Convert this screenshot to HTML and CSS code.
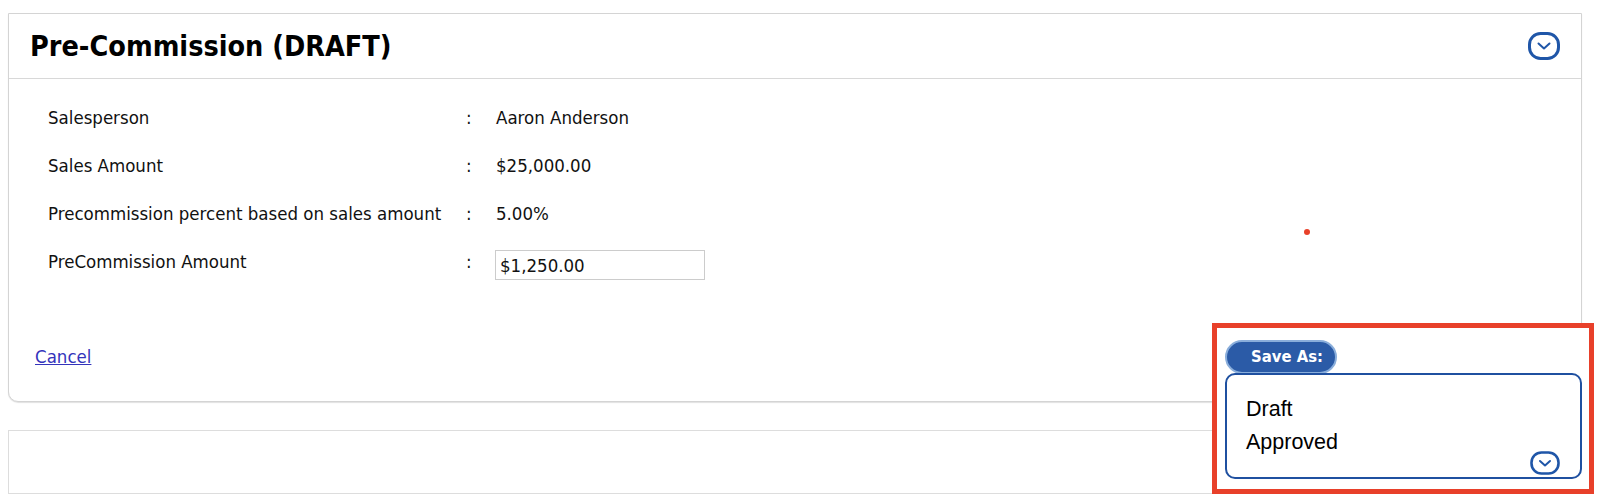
FILE: index.html
```html
<!DOCTYPE html>
<html lang="en">
<head>
<meta charset="utf-8">
<title>Pre-Commission (DRAFT)</title>
<link rel="stylesheet" href="styles.css">
</head>
<body>
<div class="page">
  <section class="card">
    <header class="card-head">
      <h1 class="title">Pre-Commission (DRAFT)</h1>
      <svg class="chev" width="32" height="28" viewBox="0 0 32 28" aria-hidden="true">
        <rect x="1.5" y="1.5" width="29" height="25" rx="11" ry="11" fill="none" stroke="#1f56a8" stroke-width="3"/>
        <path d="M10.5 11.5 L16 16.5 L21.5 11.5" fill="none" stroke="#1f56a8" stroke-width="2" stroke-linecap="round" stroke-linejoin="round"/>
      </svg>
    </header>
    <div class="card-body">
      <div class="rows">
        <div class="row"><span class="label">Salesperson</span><span class="colon">:</span><span class="value">Aaron Anderson</span></div>
        <div class="row"><span class="label">Sales Amount</span><span class="colon">:</span><span class="value">$25,000.00</span></div>
        <div class="row"><span class="label">Precommission percent based on sales amount</span><span class="colon">:</span><span class="value">5.00%</span></div>
        <div class="row"><span class="label">PreCommission Amount</span><span class="colon">:</span><span class="value"><input class="amount" type="text" value="$1,250.00"></span></div>
      </div>
      <a class="cancel" href="#">Cancel</a>
    </div>
  </section>
  <section class="card2"></section>
</div>

<span class="dot"></span>

<div class="save-box">
  <div class="save-pill">Save As:</div>
  <div class="listbox">
    <div class="option">Draft</div>
    <div class="option">Approved</div>
    <svg class="chev-small" width="30" height="24" viewBox="0 0 30 24" aria-hidden="true">
      <rect x="1.5" y="1.5" width="27" height="21" rx="10" ry="10" fill="none" stroke="#1f56a8" stroke-width="2.6"/>
      <path d="M10 10 L15 14.5 L20 10" fill="none" stroke="#1f56a8" stroke-width="2" stroke-linecap="round" stroke-linejoin="round"/>
    </svg>
  </div>
</div>
</body>
</html>
```

FILE: styles.css
```css
* { box-sizing: border-box; }

html, body {
  margin: 0;
  padding: 0;
  background: #ffffff;
}

body {
  width: 1600px;
  height: 497px;
  overflow: hidden;
  position: relative;
  font-family: "DejaVu Sans Condensed", "DejaVu Sans", sans-serif;
  font-size: 18.5px;
  color: #111111;
}

.page {
  padding: 13px 18px 0 8px;
}

.card {
  border: 1px solid #d4d4d4;
  border-radius: 0 0 10px 10px;
  box-shadow: 0 1px 1px rgba(0, 0, 0, 0.12);
  background: #fff;
}

.card-head {
  height: 65px;
  border-bottom: 1px solid #d8d8d8;
  display: flex;
  align-items: center;
  justify-content: space-between;
  padding: 0 21px 0 21px;
}

.title {
  margin: 0;
  font-family: "DejaVu Sans Condensed", "DejaVu Sans", sans-serif;
  font-weight: bold;
  font-size: 28.5px;
  color: #000;
}

.chev {
  display: block;
  margin-top: -1px;
}

.card-body {
  padding: 15px 0 34px 39px;
}

.rows {
  display: flex;
  flex-direction: column;
}

.row {
  height: 48px;
  display: grid;
  grid-template-columns: 418px 30px auto;
  align-items: center;
  line-height: 22px;
}

.label, .colon, .value {
  white-space: nowrap;
}

.amount {
  display: block;
  width: 210px;
  height: 30px;
  margin: 6px 0 0 -1px;
  border: 1px solid #cccccc;
  padding: 1px 4px 0 4px;
  font-family: "DejaVu Sans Condensed", "DejaVu Sans", sans-serif;
  font-size: 18.5px;
  color: #111;
  background: #fff;
  outline: none;
}

.cancel {
  display: inline-block;
  margin: 61px 0 0 -13px;
  line-height: 20px;
  color: #3434bb;
  text-decoration: underline;
}

.card2 {
  margin-top: 28px;
  height: 64px;
  border: 1px solid #dddddd;
}

.dot {
  position: absolute;
  left: 1304px;
  top: 229px;
  width: 6px;
  height: 6px;
  border-radius: 50%;
  background: #e8412a;
}

.save-box {
  position: absolute;
  left: 1212px;
  top: 323px;
  width: 382px;
  height: 171px;
  border: 5px solid #e8402a;
  background: #fff;
  padding: 12px 7px 8px 8px;
  display: flex;
  flex-direction: column;
}

.save-pill {
  width: 112px;
  height: 34px;
  border-radius: 17px;
  background: #2b5ba7;
  border: 2px solid #8aaedb;
  color: #fff;
  font-family: "DejaVu Sans Condensed", "DejaVu Sans", sans-serif;
  font-weight: bold;
  font-size: 16.5px;
  line-height: 30px;
  text-align: center;
  padding-left: 12px;
}

.listbox {
  position: relative;
  margin-top: -1px;
  height: 106px;
  border: 2px solid #1f50a0;
  border-radius: 10px;
  padding: 18px 0 0 19px;
  font-family: "Liberation Sans", Arial, sans-serif;
  font-size: 21.5px;
  color: #000;
}

.option {
  line-height: 33px;
}

.chev-small {
  position: absolute;
  right: 20px;
  bottom: 2px;
}
```
